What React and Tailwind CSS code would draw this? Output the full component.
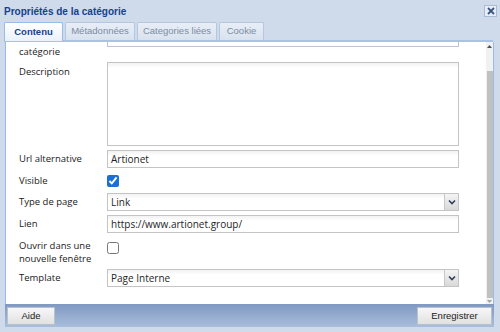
import React from "react";

function Chevron() {
  return (
    <svg width="8" height="6" viewBox="0 0 8 6">
      <path d="M1 1.5 L4 4.5 L7 1.5" fill="none" stroke="#2f3f5c" strokeWidth="1.6" />
    </svg>
  );
}

function TextField({ value, className = "" }) {
  return (
    <div
      className={
        "w-[352px] h-[18px] border border-[#c4c4c4] bg-white bg-gradient-to-b from-[#f2f2f2] to-white to-[30%] flex items-center pl-[3px] text-[10px] text-[#1e1e1e] font-['Open_Sans',sans-serif] " +
        className
      }
    >
      {value}
    </div>
  );
}

function SelectField({ value }) {
  return (
    <div className="w-[352px] h-[18px] border border-[#c4c4c4] bg-white flex items-stretch font-['Open_Sans',sans-serif]">
      <div className="flex-1 flex items-center pl-[3px] text-[10px] text-[#1e1e1e] bg-gradient-to-b from-[#f2f2f2] to-white to-[30%]">
        {value}
      </div>
      <div className="w-[14px] border-l border-[#c8c8c8] bg-gradient-to-b from-[#f4f4f4] to-[#d9d9d9] flex items-center justify-center">
        <Chevron />
      </div>
    </div>
  );
}

function Label({ children, className = "" }) {
  return (
    <div
      className={
        "w-[88px] shrink-0 text-[9.5px] leading-[13px] text-[#1a1a1a] font-['Open_Sans',sans-serif] " +
        className
      }
    >
      {children}
    </div>
  );
}

function Check({ checked, className = "" }) {
  return (
    <input
      type="checkbox"
      checked={checked}
      readOnly
      className={"m-0 w-[12px] h-[12px] accent-[#1a6fd8] " + className}
    />
  );
}

export default function App() {
  return (
    <div className="w-[500px] h-[332px] bg-[#cfdbeb] flex flex-col overflow-hidden font-['Liberation_Sans',Arial,sans-serif]">
      {/* Title bar */}
      <div className="h-[22px] shrink-0 flex items-center justify-between pl-[4px] pr-[3px]">
        <span className="text-[10px] font-bold text-[#15428b]">Propriétés de la catégorie</span>
        <div className="w-[13px] h-[12px] border border-[#a9bcd6] bg-[#e6edf6] flex items-center justify-center">
          <svg width="8" height="8" viewBox="0 0 8 8">
            <path d="M1 1 L7 7 M7 1 L1 7" stroke="#3a5580" strokeWidth="1.8" />
          </svg>
        </div>
      </div>

      {/* Tab strip */}
      <div className="h-[20px] shrink-0 ml-[4px] mr-[7px] flex items-stretch gap-[2px] border-b-2 border-[#aac3e4]">
        <div className="w-[59px] h-[19px] -mb-[1px] border border-b-0 border-[#99bbe8] rounded-t-[2px] bg-gradient-to-b from-white to-[#eaf1fa] flex items-center justify-center text-[9.5px] font-bold text-[#15428b]">
          Contenu
        </div>
        <div className="w-[70px] h-[18px] border border-b-0 border-[#b3c7e0] rounded-t-[2px] bg-gradient-to-b from-[#e8eef6] to-[#d8e2ee] flex items-center justify-center text-[9.5px] text-[#7c8ba2]">
          Métadonnées
        </div>
        <div className="w-[80px] h-[18px] border border-b-0 border-[#b3c7e0] rounded-t-[2px] bg-gradient-to-b from-[#e8eef6] to-[#d8e2ee] flex items-center justify-center text-[9.5px] text-[#7c8ba2]">
          Categories liées
        </div>
        <div className="w-[45px] h-[18px] border border-b-0 border-[#b3c7e0] rounded-t-[2px] bg-gradient-to-b from-[#e8eef6] to-[#d8e2ee] flex items-center justify-center text-[9.5px] text-[#7c8ba2]">
          Cookie
        </div>
      </div>

      {/* Body panel */}
      <div className="flex-1 min-h-0 ml-[5px] mr-[6px] border-x border-[#99bbe8] bg-white flex overflow-hidden">
        <div className="flex-1 min-w-0 overflow-hidden pl-[13px]">
          <div className="-mt-[13px] flex flex-col gap-[4px]">
            <div className="flex items-start">
              <Label className="pt-[3px]">Nom de la catégorie</Label>
              <TextField value="Artionet" />
            </div>
            <div className="flex items-start">
              <Label className="pt-[3px]">Description</Label>
              <div className="w-[352px] h-[84px] border border-[#c4c4c4] bg-white bg-gradient-to-b from-[#f2f2f2] to-white to-[6%]" />
            </div>
            <div className="flex items-start">
              <Label className="pt-[2px]">Url alternative</Label>
              <TextField value="Artionet" />
            </div>
            <div className="flex items-center h-[17px]">
              <Label>Visible</Label>
              <Check checked={true} />
            </div>
            <div className="flex items-start">
              <Label className="pt-[2px]">Type de page</Label>
              <SelectField value="Link" />
            </div>
            <div className="flex items-start">
              <Label className="pt-[2px]">Lien</Label>
              <TextField value="https://www.artionet.group/" />
            </div>
            <div className="flex items-start">
              <Label className="pt-[2px]">Ouvrir dans une nouvelle fenêtre</Label>
              <Check checked={false} className="mt-[5px]" />
            </div>
            <div className="flex items-start">
              <Label className="pt-[2px]">Template</Label>
              <SelectField value="Page Interne" />
            </div>
          </div>
        </div>
        {/* Scrollbar */}
        <div className="w-[7px] shrink-0 bg-[#f1f1f1] flex flex-col items-center">
          <div className="h-[29px] flex items-start justify-center pt-[3px]">
            <svg width="5" height="3" viewBox="0 0 5 3">
              <path d="M0 3 L2.5 0 L5 3 Z" fill="#505050" />
            </svg>
          </div>
          <div className="w-[6px] flex-1 bg-[#c1c1c1]" />
          <div className="h-[6px] flex items-center justify-center">
            <svg width="5" height="3" viewBox="0 0 5 3">
              <path d="M0 0 L2.5 3 L5 0 Z" fill="#a3a3a3" />
            </svg>
          </div>
        </div>
      </div>

      {/* Footer */}
      <div className="h-[23px] shrink-0 ml-[5px] mr-[6px] bg-gradient-to-b from-[#8099c2] to-[#a9bedb] flex items-center justify-between px-[2px] pt-[1px]">
        <div className="w-[48px] h-[18px] border border-[#b9c2cc] bg-gradient-to-b from-[#f7f7f7] to-[#e1e1e1] flex items-center justify-center text-[9.5px] text-[#222]">
          Aide
        </div>
        <div className="w-[75px] h-[18px] border border-[#b9c2cc] bg-gradient-to-b from-[#f7f7f7] to-[#e1e1e1] flex items-center justify-center text-[9.5px] text-[#222]">
          Enregistrer
        </div>
      </div>
      <div className="h-[5px] shrink-0" />
    </div>
  );
}
